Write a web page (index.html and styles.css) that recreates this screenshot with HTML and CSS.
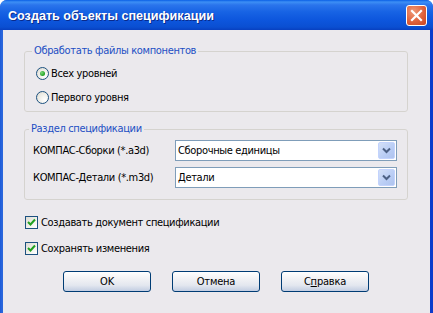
FILE: index.html
```html
<!DOCTYPE html>
<html lang="ru">
  <head>
    <meta charset="UTF-8" />
    <title>Создать объекты спецификации</title>
    <link rel="stylesheet" href="styles.css">
  </head>
  <body>
    <div class="window">
      <div class="titlebar">
        <span class="title">Создать объекты спецификации</span>
        <span class="close-btn">
          <svg width="13" height="13" viewBox="0 0 13 13">
            <path d="M2 2 L11 11 M11 2 L2 11" stroke="#fff" stroke-width="2.2" stroke-linecap="square" />
          </svg>
        </span>
      </div>

      <div class="client">
        <fieldset class="group group-files">
          <legend>Обработать файлы компонентов</legend>
          <div class="option-row">
            <span class="radio checked"></span>
            <span>Всех уровней</span>
          </div>
          <div class="option-row">
            <span class="radio"></span>
            <span>Первого уровня</span>
          </div>
        </fieldset>

        <fieldset class="group group-spec">
          <legend>Раздел спецификации</legend>
          <div class="combo-row">
            <span class="combo-label">КОМПАС-Сборки (*.a3d)</span>
            <div class="combo">
              <span class="combo-text">Сборочные единицы</span>
              <span class="combo-btn">
                <svg width="9" height="7" viewBox="0 0 9 7">
                  <path d="M1 1.5 L4.5 5 L8 1.5" fill="none" stroke="#4d6185" stroke-width="2" />
                </svg>
              </span>
            </div>
          </div>
          <div class="combo-row">
            <span class="combo-label">КОМПАС-Детали (*.m3d)</span>
            <div class="combo">
              <span class="combo-text">Детали</span>
              <span class="combo-btn">
                <svg width="9" height="7" viewBox="0 0 9 7">
                  <path d="M1 1.5 L4.5 5 L8 1.5" fill="none" stroke="#4d6185" stroke-width="2" />
                </svg>
              </span>
            </div>
          </div>
        </fieldset>

        <div class="checks">
          <div class="option-row">
            <span class="checkbox">
              <svg width="9" height="9" viewBox="0 0 9 9">
                <path d="M1 4 L3.5 6.5 L8 1.5" fill="none" stroke="#21a121" stroke-width="2" />
              </svg>
            </span>
            <span>Создавать документ спецификации</span>
          </div>
          <div class="option-row">
            <span class="checkbox">
              <svg width="9" height="9" viewBox="0 0 9 9">
                <path d="M1 4 L3.5 6.5 L8 1.5" fill="none" stroke="#21a121" stroke-width="2" />
              </svg>
            </span>
            <span>Сохранять изменения</span>
          </div>
        </div>

        <div class="buttons">
          <button class="btn">OK</button>
          <button class="btn">Отмена</button>
          <button class="btn">С<u>п</u>равка</button>
        </div>
      </div>
    </div>
  </body>
</html>
```

FILE: styles.css
```css
body {
  margin: 0;
  background: #ffffff;
  font-family: "DejaVu Sans Condensed", "DejaVu Sans", sans-serif;
  font-stretch: condensed;
  font-size: 11px;
  letter-spacing: -0.35px;
  color: #000;
}

.window {
  width: 433px;
  height: 313px;
  overflow: hidden;
  display: flex;
  flex-direction: column;
  background: linear-gradient(to right, #1d5ad8 0, #2a66dc 2px, #0b3bcb 100%);
  border-radius: 7px 7px 0 0;
}

.titlebar {
  height: 30px;
  flex: none;
  display: flex;
  align-items: center;
  justify-content: space-between;
  padding: 0 6px 0 8px;
  background: linear-gradient(to bottom, #0a5fe6 0, #3d8ff5 2px, #2a74ec 5px, #1763e4 12px, #0d56dd 20px, #0a4fd2 27px, #0840c0 30px);
}

.title {
  color: #fff;
  font-family: "Liberation Sans", Arial, sans-serif;
  font-stretch: normal;
  font-weight: bold;
  font-size: 12.6px;
  letter-spacing: 0;
  text-shadow: 1px 1px 0 #0a2a8a;
  margin-top: 1px;
}

.close-btn {
  width: 19px;
  height: 19px;
  border: 1px solid #fff;
  border-radius: 3px;
  background: radial-gradient(circle at 35% 30%, #ef9a78 0, #e0623c 55%, #c8441f 100%);
  display: flex;
  align-items: center;
  justify-content: center;
  margin-top: 1px;
}

.client {
  flex: 1;
  margin: 0 3px;
  background: #ebe9ed;
  padding: 14px 22px 0 21px;
}

.group {
  margin: 0;
  padding: 4px 10px 4px 11px;
  border: 1px solid #d5d3cf;
  border-radius: 3px;
}

.group legend {
  color: #1d4fc4;
  line-height: 14px;
  padding: 0 2px;
  margin-left: -4px;
}

.group-files {
  display: flex;
  flex-direction: column;
  gap: 4px;
  padding-top: 5px;
}

.group-spec {
  margin-top: 10px;
  padding: 4px 9px 11px 8px;
}

.option-row {
  height: 20px;
  display: flex;
  align-items: center;
  gap: 2px;
}

.radio {
  width: 11px;
  height: 11px;
  border: 1px solid #1c5180;
  border-radius: 50%;
  background: radial-gradient(circle at 70% 70%, #ffffff 0, #ecebe4 60%, #d4d1c8 100%);
  display: flex;
  align-items: center;
  justify-content: center;
}

.radio.checked::after {
  content: "";
  width: 5px;
  height: 5px;
  border-radius: 50%;
  background: radial-gradient(circle at 35% 35%, #7ad87a 0, #21a121 70%);
}

.combo-row {
  display: flex;
  align-items: center;
  height: 21px;
}

.combo-row + .combo-row {
  margin-top: 6px;
}

.combo-label {
  width: 142px;
}

.combo {
  width: 222px;
  height: 21px;
  box-sizing: border-box;
  border: 1px solid #7f9db9;
  background: #fff;
  display: flex;
  align-items: center;
  justify-content: space-between;
  padding: 1px 1px 1px 2px;
}

.combo-btn {
  width: 15px;
  height: 15px;
  border: 1px solid #c3d3fd;
  border-radius: 2px;
  background: linear-gradient(to bottom right, #d4e0f8 0, #b9cdf5 60%, #aec3ee 100%);
  display: flex;
  align-items: center;
  justify-content: center;
}

.checks {
  margin-top: 12px;
  padding-left: 1px;
  display: flex;
  flex-direction: column;
  gap: 6px;
}

.checks .option-row {
  gap: 3px;
}

.checkbox {
  width: 11px;
  height: 11px;
  border: 1px solid #1c5180;
  background: linear-gradient(to bottom right, #dcdbd3 0, #f3f3ee 60%, #ffffff 100%);
  display: flex;
  align-items: center;
  justify-content: center;
}

.buttons {
  margin-top: 13px;
  display: flex;
  justify-content: center;
  gap: 21px;
}

.btn {
  width: 88px;
  height: 21px;
  border: 1px solid #003c74;
  border-radius: 3px;
  background: linear-gradient(to bottom, #ffffff 0, #f4f4f6 30%, #e3e7ef 70%, #c2cde2 100%);
  font-family: inherit;
  font-stretch: condensed;
  font-size: 11px;
  letter-spacing: -0.2px;
  color: #000;
  padding: 0;
}
```
